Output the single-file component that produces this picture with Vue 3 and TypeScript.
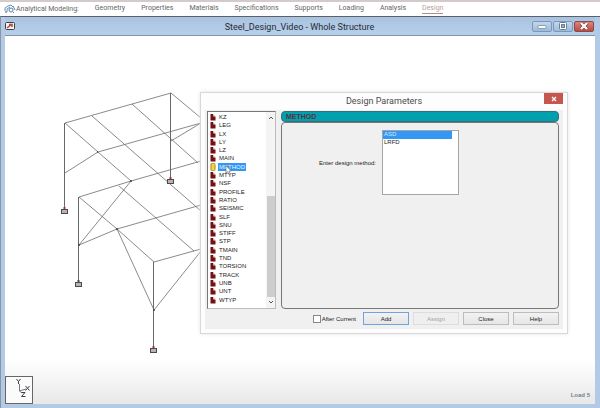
<script setup lang="ts">
import { ref } from 'vue'

type Point = [number, number]

const tabs: string[] = ['Geometry', 'Properties', 'Materials', 'Specifications', 'Supports', 'Loading', 'Analysis', 'Design']
const activeTab = ref('Design')

const parameters: string[] = [
  'KZ', 'LEG', 'LX', 'LY', 'LZ', 'MAIN', 'METHOD', 'MTYP', 'NSF', 'PROFILE', 'RATIO', 'SEISMIC',
  'SLF', 'SNU', 'STIFF', 'STP', 'TMAIN', 'TND', 'TORSION', 'TRACK', 'UNB', 'UNT', 'WTYP',
]
const selected = ref('METHOD')
const method = ref('ASD')
const afterCurrent = ref(false)

const members: Point[][] = [
  [[65, 123], [171, 93], [201, 118]],
  [[65, 123], [98, 152], [131, 181]],
  [[65, 173], [98, 152], [201, 123]],
  [[171, 141], [201, 123]],
  [[92, 116], [201, 211]],
  [[132, 104], [198, 163]],
  [[79, 197], [131, 181], [201, 161]],
  [[79, 197], [117, 229], [154, 262]],
  [[119, 186], [194, 251]],
  [[131, 181], [79, 245], [117, 229], [201, 205]],
  [[117, 229], [154, 310], [201, 251]],
  [[154, 262], [201, 249]],
]
const columns = [
  { x: 64.5, top: 123, foot: 208, pin: '#b03030' },
  { x: 170.5, top: 93, foot: 178, pin: '#b03030' },
  { x: 78.5, top: 197, foot: 281, pin: '#3a4a66' },
  { x: 153.5, top: 262, foot: 347, pin: '#b03030' },
]
const toPoints = (line: Point[]): string => line.map((p) => p.join(',')).join(' ')
</script>

<template>
  <div class="app">
    <nav class="tabs">
      <span class="mode">
        <svg width="12" height="10" viewBox="0 0 12 10" fill="none">
          <path d="M1 7V4L4 2L7 1L9 3M3 8V5L6 3" stroke="#5b94c4" />
          <circle cx="7" cy="6" r="2" stroke="#5d7f9d" />
          <path d="M9 2L11 6M9 8L10 9" stroke="#4d86b8" />
          <circle cx="2" cy="8" r="1" fill="#b9857c" />
        </svg>
        Analytical Modeling:
      </span>
      <a
        v-for="tab in tabs"
        :key="tab"
        href="#"
        :class="{ active: tab === activeTab }"
        @click.prevent="activeTab = tab"
      >{{ tab }}</a>
    </nav>

    <main class="window">
      <header class="window-bar">
        <svg class="doc-icon" width="10" height="8" viewBox="0 0 10 8">
          <rect x="0.5" y="0.5" width="9" height="7" rx="1" fill="#f4f1ef" stroke="#3c4048" />
          <path d="M2 6L7 2M4 2.5H7V5" stroke="#b14a42" stroke-width="1.5" fill="none" />
        </svg>
        <h1>Steel_Design_Video - Whole Structure</h1>
        <div class="controls">
          <button type="button" aria-label="Minimize">
            <svg width="10" height="8" viewBox="0 0 10 8"><rect x="1" y="3.5" width="8" height="3" rx="1" fill="#fff" stroke="#6d7f94" stroke-width="0.7" /></svg>
          </button>
          <button type="button" aria-label="Maximize">
            <svg width="10" height="8" viewBox="0 0 10 8"><rect x="1.5" y="0.5" width="7" height="7" rx="1" fill="#fff" stroke="#6d7f94" /><rect x="3.5" y="2.5" width="3" height="3" fill="#8fb0d2" stroke="#6d7f94" /></svg>
          </button>
          <button type="button" class="red" aria-label="Close window">
            <svg width="10" height="8" viewBox="0 0 10 8"><path d="M2 1L8 7M8 1L2 7" stroke="#803c3c" stroke-width="3.4" /><path d="M2 1L8 7M8 1L2 7" stroke="#fff" stroke-width="2.2" /></svg>
          </button>
        </div>
      </header>

      <section class="canvas">
        <svg class="structure" width="196" height="330" viewBox="5 36 196 330" fill="none">
          <polyline v-for="(line, i) in members" :key="i" :points="toPoints(line)" stroke="#6c6c6c" stroke-width="0.8" />
          <g v-for="c in columns" :key="c.x">
            <path :d="`M${c.x} ${c.top}V${c.foot}`" stroke="#686868" />
            <rect :x="c.x - 1" :y="c.foot - 1" width="2" height="2" :fill="c.pin" />
            <rect :x="c.x - 3" :y="c.foot + 1.5" width="6" height="4" fill="#b5b5b5" stroke="#4a4a4a" />
          </g>
          <path d="M97 152h1M130 181h2M78 245h2M116 229h2M153 310h2" stroke="#444" stroke-width="1.5" />
        </svg>

        <svg class="axes" width="28" height="28" viewBox="0 0 28 28" fill="none" stroke="#3c3c48">
          <rect x="0.5" y="0.5" width="27" height="27" fill="#fbfbfb" stroke="#666" />
          <path d="M14.5 8V15L21 13M14.5 15L17 17" stroke="#777" />
          <path d="M11.500 3L13.500 5.500L15.500 3M13.500 5.500V8M20.500 10L24.500 14.500M24.500 10L20.500 14.500M16.500 16.500H20L16.500 20.500H20.500" />
        </svg>
        <span class="load">Load 5</span>

        <section class="dialog" role="dialog" aria-labelledby="dialog-title">
          <header class="dialog-bar">
            <h2 id="dialog-title">Design Parameters</h2>
            <button type="button" class="dismiss" aria-label="Close dialog">
              <svg width="6" height="6" viewBox="0 0 6 6"><path d="M1 1L5 5M5 1L1 5" stroke="#fff" stroke-width="1.3" /></svg>
            </button>
          </header>

          <div class="client">
            <div class="body">
              <div class="tree">
                <ul>
                  <li v-for="name in parameters" :key="name">
                    <button type="button" :class="{ selected: name === selected }" @click="selected = name">
                      <svg v-if="name === selected" width="6" height="8" viewBox="0 0 6 8">
                        <path d="M1 0.500H5V7.500H1Z" fill="#f1d34b" stroke="#a98d2b" stroke-width="0.7" />
                        <path d="M0 2H2M0 4H2M0 6H2M4 3H6M4 5H6" stroke="#c8a633" />
                      </svg>
                      <svg v-else width="6" height="8" viewBox="0 0 6 8">
                        <path d="M0.500 1H3L3.500 3.500H5.500V7.500H0.500Z" fill="#741014" />
                        <path d="M3 1.500L5 3" stroke="#bd8585" stroke-width="0.6" />
                      </svg>
                      <span>{{ name }}</span>
                    </button>
                  </li>
                </ul>
                <div class="scroll">
                  <svg width="6" height="4" viewBox="0 0 6 4" fill="none"><path d="M1 3L3 1L5 3" stroke="#555" /></svg>
                  <div class="thumb"></div>
                  <svg width="6" height="4" viewBox="0 0 6 4" fill="none"><path d="M1 1L3 3L5 1" stroke="#555" /></svg>
                </div>
                <svg class="pointer" width="7" height="10" viewBox="0 0 7 10">
                  <path d="M1 0.500V8L2.700 6.500L4 9.500L5.200 9L4 6H6.300Z" fill="#fff" stroke="#555" stroke-width="0.6" />
                </svg>
              </div>

              <div class="panel">
                <h3>{{ selected }}</h3>
                <div class="form">
                  <label for="method">Enter design method:</label>
                  <select id="method" v-model="method" size="2">
                    <option>ASD</option>
                    <option>LRFD</option>
                  </select>
                </div>
              </div>
            </div>

            <footer class="actions">
              <label><input v-model="afterCurrent" type="checkbox" />After Current</label>
              <button type="button" class="primary">Add</button>
              <button type="button" disabled>Assign</button>
              <button type="button">Close</button>
              <button type="button">Help</button>
            </footer>
          </div>
        </section>
      </section>
    </main>
  </div>
</template>

<style>
body {
  margin: 0;
}
</style>

<style scoped>
.app {
  display: flex;
  flex-direction: column;
  min-height: 100vh;
  background: #fff;
  font-family: Roboto, "Open Sans", sans-serif;
}
.app * {
  box-sizing: border-box;
}
h1,
h2,
h3,
ul {
  margin: 0;
  padding: 0;
  font-weight: 400;
}
button {
  font: inherit;
  padding: 0;
}
svg {
  display: block;
  flex: none;
}

.tabs {
  display: flex;
  align-items: center;
  gap: 16px;
  height: 16px;
  padding: 0 4px 1px;
  border-top: 2px solid #d3cacb;
  font-size: 7px;
  line-height: 10px;
  color: #666;
  white-space: nowrap;
}
.mode {
  display: flex;
  align-items: center;
}
.tabs a {
  color: inherit;
  text-decoration: none;
  border-bottom: 1px solid transparent;
}
.tabs .active {
  color: #b9a0a0;
  border-color: #b08f91;
}

.window {
  flex: 1;
  display: flex;
  flex-direction: column;
  padding: 0 5px 4px 4px;
  border-top: 1px solid #59616d;
  border-left: 1px solid #8795a5;
  background: #b2cae5;
}
.window-bar {
  display: grid;
  grid-template-columns: 1fr auto 1fr;
  align-items: center;
  height: 18px;
  padding-right: 1px;
  background: linear-gradient(#a9c3e0, #b8cfe8);
}
.window-bar h1 {
  padding-top: 2px;
  font-size: 9px;
  line-height: 12px;
  color: #222c38;
}
.controls {
  display: flex;
  justify-content: flex-end;
  gap: 1px;
}
.controls button {
  display: grid;
  place-items: center;
  width: 20px;
  height: 11px;
  border: 1px solid #7d98b7;
  border-radius: 2px;
  background: linear-gradient(#c5d8ec, #9bbadb);
}
.controls .red {
  border-color: #8a4a4a;
  background: linear-gradient(#d9877c, #be4a3e);
}

.canvas {
  position: relative;
  flex: 1;
  border-top: 1px solid #8294aa;
  background: linear-gradient(#fff 88%, #e8e8e8);
}
.axes {
  position: absolute;
  left: 0;
  bottom: 0;
}
.load {
  position: absolute;
  right: 5px;
  bottom: 5px;
  font: bold 6px/8px "Liberation Sans", sans-serif;
  color: #6d8492;
}

.dialog {
  position: absolute;
  left: 195px;
  top: 56px;
  width: 368px;
  padding: 0 4px 4px;
  border: 1px solid #d8d8d8;
  background: #fdfdfd;
  box-shadow: 0 0 4px #e4e4e4;
}
.dialog-bar {
  display: grid;
  grid-template-columns: 1fr auto 1fr;
  align-items: start;
  height: 17px;
}
.dialog-bar h2 {
  grid-column: 2;
  padding-top: 2px;
  font-size: 9px;
  line-height: 12px;
  color: #4c4c4c;
}
.dismiss {
  display: grid;
  place-items: center;
  justify-self: end;
  width: 19px;
  height: 11px;
  border: 0;
  background: #c6574f;
}
.client {
  padding: 1px 4px 4px 2px;
  background: #f0f0f0;
  font: 6px/8px "Liberation Sans", Arial, sans-serif;
  color: #222;
}
.body {
  display: flex;
  gap: 5px;
  height: 198px;
}
.tree {
  position: relative;
  display: flex;
  width: 69px;
  border: 1px solid #bcbcbc;
  border-top-color: #777;
  border-left-color: #777;
  background: #fff;
}
.tree ul {
  flex: 1;
  display: flex;
  flex-direction: column;
  padding: 1px 0 4px 2px;
  list-style: none;
}
.tree li {
  flex: 1;
  min-height: 0;
}
.tree li button {
  display: flex;
  align-items: center;
  gap: 2px;
  border: 0;
  background: none;
  color: #222;
  line-height: 8px;
}
.tree li span {
  padding: 0 1px;
}
.tree .selected span {
  background: #3397f3;
  color: #e8f4ff;
}
.scroll {
  display: flex;
  flex-direction: column;
  align-items: center;
  width: 9px;
  padding: 4px 0;
  background: #f4f4f4;
}
.thumb {
  width: 8px;
  height: 101px;
  margin: auto 0 3px;
  background: #cdcdcd;
}
.pointer {
  position: absolute;
  left: 17px;
  top: 53px;
}

.panel {
  flex: 1;
  display: flex;
  flex-direction: column;
}
.panel h3 {
  height: 11px;
  padding-left: 4px;
  border: 1px solid #3b6f78;
  border-radius: 4px;
  background: #00a0b0;
  font-size: 7px;
  line-height: 9px;
  font-weight: 700;
  color: #5a3038;
}
.form {
  flex: 1;
  display: grid;
  grid-template-columns: 94px 77px;
  align-content: start;
  align-items: center;
  gap: 6px;
  padding-top: 7px;
  border: 1px solid #777;
  border-radius: 4px;
}
.form label {
  text-align: right;
}
.form select {
  height: 65px;
  padding: 0;
  border: 1px solid #a5a5a5;
  border-radius: 0;
  outline: 0;
  background: #fff;
  font: inherit;
  color: #222;
  overflow: hidden;
}
.form option {
  min-height: 8px;
  padding: 0 1px;
  margin-right: 6px;
}
.form option:checked {
  background: #3397f3 linear-gradient(#3397f3, #3397f3);
  color: #d5eaff;
}

.actions {
  display: flex;
  align-items: center;
  gap: 4px;
  padding-top: 3px;
}
.actions label {
  display: flex;
  align-items: center;
  gap: 1px;
  margin-left: auto;
  margin-right: 3px;
}
.actions input {
  appearance: none;
  width: 8px;
  height: 8px;
  margin: 0;
  border: 1px solid #888;
  background: #fff;
}
.actions input:checked {
  background: #3397f3;
}
.actions button {
  width: 46px;
  height: 13px;
  border: 1px solid #bcbcbc;
  background: linear-gradient(#f2f2f2, #e6e6e6);
  color: #222;
}
.actions .primary {
  border-color: #6ca5df;
}
.actions button:disabled {
  border-color: #ddd;
  background: #efefef;
  color: #a2a2a2;
}
</style>
